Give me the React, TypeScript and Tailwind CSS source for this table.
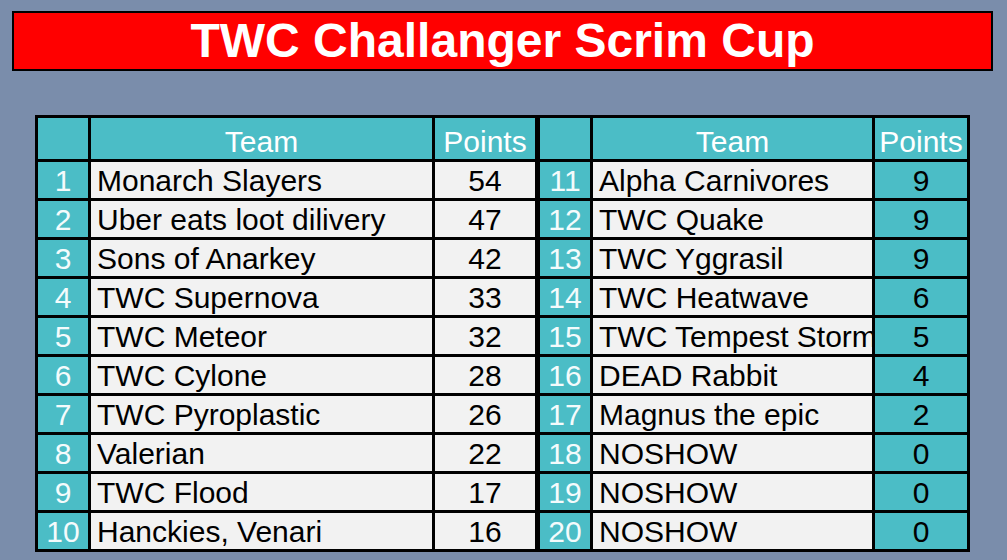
import React from 'react';

const leftRows = [
  { rank: 1, team: 'Monarch Slayers', points: 54 },
  { rank: 2, team: 'Uber eats loot dilivery', points: 47 },
  { rank: 3, team: 'Sons of Anarkey', points: 42 },
  { rank: 4, team: 'TWC Supernova', points: 33 },
  { rank: 5, team: 'TWC Meteor', points: 32 },
  { rank: 6, team: 'TWC Cylone', points: 28 },
  { rank: 7, team: 'TWC Pyroplastic', points: 26 },
  { rank: 8, team: 'Valerian', points: 22 },
  { rank: 9, team: 'TWC Flood', points: 17 },
  { rank: 10, team: 'Hanckies, Venari', points: 16 },
];

const rightRows = [
  { rank: 11, team: 'Alpha Carnivores', points: 9 },
  { rank: 12, team: 'TWC Quake', points: 9 },
  { rank: 13, team: 'TWC Yggrasil', points: 9 },
  { rank: 14, team: 'TWC Heatwave', points: 6 },
  { rank: 15, team: 'TWC Tempest Storm', points: 5 },
  { rank: 16, team: 'DEAD Rabbit', points: 4 },
  { rank: 17, team: 'Magnus the epic', points: 2 },
  { rank: 18, team: 'NOSHOW', points: 0 },
  { rank: 19, team: 'NOSHOW', points: 0 },
  { rank: 20, team: 'NOSHOW', points: 0 },
];

type Row = { rank: number; team: string; points: number };

const cell = 'flex items-end overflow-hidden whitespace-nowrap leading-[34px]';

const ScoreTable = ({ rows, cols, pointsTeal }: { rows: Row[]; cols: string; pointsTeal: boolean }) => (
  <div className={`grid ${cols} grid-rows-[41px_repeat(10,36px)] gap-[3px]`}>
    {/* Kopfzeile */}
    <div className="bg-[#4bbdc6]" />
    <div className={`${cell} justify-center bg-[#4bbdc6] text-white`}>Team</div>
    <div className={`${cell} justify-center bg-[#4bbdc6] text-white`}>Points</div>

    {rows.map((row) => (
      <React.Fragment key={row.rank}>
        <div className={`${cell} justify-center bg-[#4bbdc6] text-[#f4fbfc]`}>{row.rank}</div>
        <div className={`${cell} bg-[#f2f2f2] pl-[6px] text-black`}>{row.team}</div>
        <div className={`${cell} justify-center text-black ${pointsTeal ? 'bg-[#4bbdc6]' : 'bg-[#f2f2f2]'}`}>
          {row.points}
        </div>
      </React.Fragment>
    ))}
  </div>
);

export default function App() {
  return (
    <div
      className="h-[560px] w-[1007px] overflow-hidden bg-[#7a8dab] pt-[11px]"
      style={{ fontFamily: '"Liberation Sans", Arial, sans-serif' }}
    >
      <div className="ml-[12px] flex h-[60px] w-[981px] items-center justify-center border-2 border-black bg-[#ff0000]">
        <h1 className="text-[48px] font-bold leading-none text-white">TWC Challanger Scrim Cup</h1>
      </div>

      <div className="ml-[35px] mt-[44px] flex w-fit gap-[5px] bg-black p-[3px] text-[30px]">
        <ScoreTable rows={leftRows} cols="grid-cols-[50px_341px_100px]" pointsTeal={false} />
        <ScoreTable rows={rightRows} cols="grid-cols-[50px_279px_92px]" pointsTeal={true} />
      </div>
    </div>
  );
}
